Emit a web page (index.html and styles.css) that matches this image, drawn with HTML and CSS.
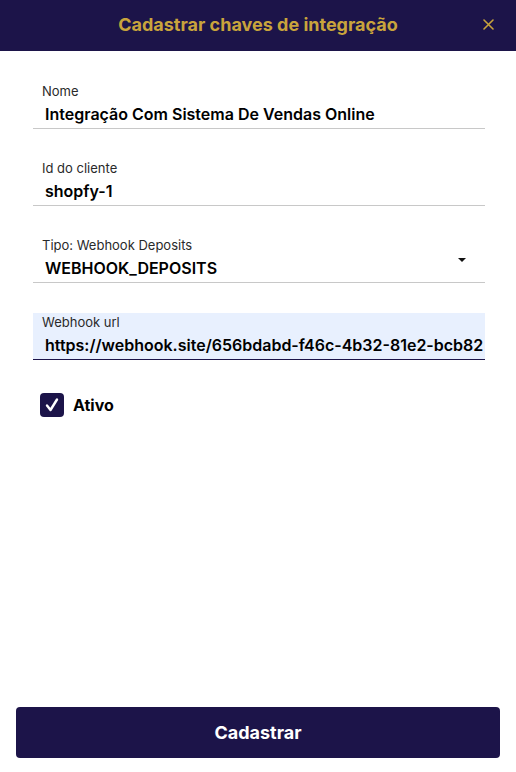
FILE: index.html
```html
<!DOCTYPE html>
<html lang="pt-BR">
<head>
<meta charset="utf-8">
<title>Cadastrar chaves de integração</title>
<link rel="stylesheet" href="styles.css">
</head>
<body>
<div class="modal">
  <header class="header">
    <h1 class="title">Cadastrar chaves de integração</h1>
    <button class="close" aria-label="Fechar">
      <svg width="11" height="11" viewBox="0 0 11 11"><path d="M1 1L10 10M10 1L1 10" stroke="#c9a43c" stroke-width="1.6" stroke-linecap="round"/></svg>
    </button>
  </header>
  <main class="body">
    <div class="field">
      <div class="label">Nome</div>
      <div class="value">Integração Com Sistema De Vendas Online</div>
    </div>
    <div class="field">
      <div class="label">Id do cliente</div>
      <div class="value">shopfy-1</div>
    </div>
    <div class="field select">
      <div class="label">Tipo: Webhook Deposits</div>
      <div class="value">WEBHOOK_DEPOSITS</div>
      <span class="arrow"></span>
    </div>
    <div class="field filled">
      <div class="label">Webhook url</div>
      <div class="value">https://webhook.site/656bdabd-f46c-4b32-81e2-bcb82</div>
    </div>
    <label class="check">
      <span class="box">
        <svg width="16" height="16" viewBox="0 0 16 16"><path d="M3 8.5L6.5 13L13 2.5" fill="none" stroke="#fff" stroke-width="2.4" stroke-linecap="round" stroke-linejoin="round"/></svg>
      </span>
      <span class="check-text">Ativo</span>
    </label>
  </main>
  <footer class="footer">
    <button class="submit">Cadastrar</button>
  </footer>
</div>
</body>
</html>
```
FILE: styles.css
```css
* { box-sizing: border-box; }
html, body { margin: 0; padding: 0; height: 100%; }
body {
  font-family: Inter, "Noto Sans", sans-serif;
  background: #fff;
  color: #000;
}
.modal {
  display: flex;
  flex-direction: column;
  height: 772px;
}
.header {
  position: relative;
  height: 51px;
  background: #1c1449;
  display: flex;
  align-items: center;
  justify-content: center;
}
.title {
  margin: 0;
  font-size: 18px;
  font-weight: 700;
  color: #c9a43c;
  line-height: 22px;
  padding-bottom: 2px;
}
.close {
  position: absolute;
  right: 22px;
  top: 19px;
  width: 11px;
  height: 11px;
  padding: 0;
  border: 0;
  background: none;
  display: flex;
}
.body {
  flex: 1;
  padding: 31px 31px 0 33px;
  display: flex;
  flex-direction: column;
  gap: 30px;
}
.field {
  position: relative;
  padding: 1px 0 4px 0;
  border-bottom: 1px solid #c8c8c8;
}
.label {
  font-size: 13px;
  line-height: 16px;
  color: #2a2a2a;
  padding-left: 9px;
}
.value {
  margin-top: 5px;
  font-size: 16px;
  font-weight: 600;
  line-height: 20px;
  padding-left: 12px;
  white-space: nowrap;
  overflow: hidden;
}
.arrow {
  position: absolute;
  right: 19px;
  top: 22px;
  width: 0;
  height: 0;
  border-left: 4px solid transparent;
  border-right: 4px solid transparent;
  border-top: 4px solid #111;
}
.filled {
  background: #e8f0fe;
  border-bottom-color: #1c1449;
}
.check {
  display: flex;
  align-items: center;
  gap: 9px;
  margin-top: 3px;
  padding-left: 7px;
}
.box {
  width: 24px;
  height: 24px;
  border-radius: 4px;
  background: #1c1449;
  display: flex;
  align-items: center;
  justify-content: center;
}
.check-text {
  font-size: 16px;
  font-weight: 700;
}
.footer {
  padding: 0 16px 14px 16px;
}
.submit {
  width: 100%;
  height: 51px;
  border: 0;
  border-radius: 4px;
  background: #1c1449;
  color: #fff;
  font-family: Inter, "Noto Sans", sans-serif;
  font-size: 18px;
  font-weight: 700;
}
```
